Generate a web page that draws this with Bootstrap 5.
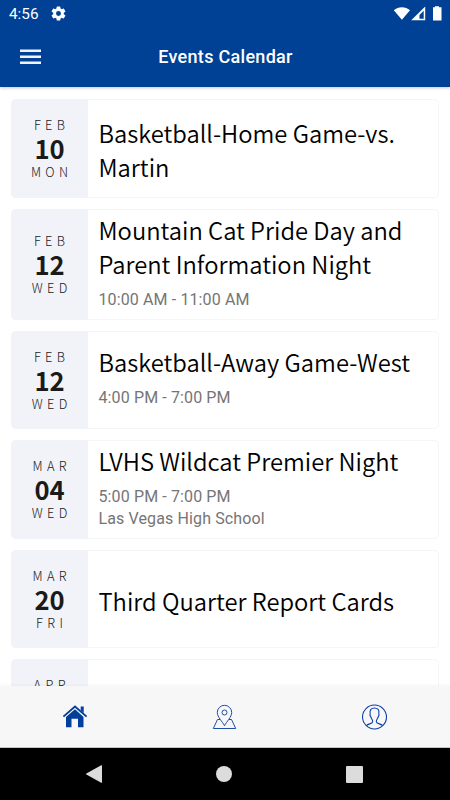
<!DOCTYPE html>
<html lang="en">
<head>
<meta charset="utf-8">
<meta name="viewport" content="width=device-width, initial-scale=1">
<title>Events Calendar</title>
<link href="https://cdn.jsdelivr.net/npm/bootstrap@5.3.0/dist/css/bootstrap.min.css" rel="stylesheet">
<style>
  body { font-family: Roboto, "Liberation Sans", sans-serif; height: 800px; }
  svg { display: block; }
  .app-head { background: #004195; height: 87px; box-shadow: 0 1px 3px rgba(0,0,0,.22); z-index: 2; }
  .status { height: 27px; padding: 0 8px 0 9px; font-size: 15.3px; line-height: 27px; }
  .status span { padding-top: 1px; }
  .gear { margin-left: 11px; }
  .title-row { height: 60px; display: grid; grid-template-columns: 78px 1fr 78px; }
  .title-row h1 { font-size: 18px; font-weight: 500; letter-spacing: .3px; line-height: 22px; padding-left: 1px; }
  .burger { margin-left: 20px; }
  .events { padding: 12px 11px 0; gap: 11px; }
  .event { border: 1px solid #f5f5f6; border-radius: 5px; min-height: 98.6px; }
  .event.tall { min-height: 111px; }
  .date { width: 77px; margin: -1px 0 -1px -1px; background: #f2f3f8; border-radius: 5px 0 0 5px; font-family: "Noto Sans CJK SC", sans-serif; color: #1a1a1a; }
  .date span { font-size: 12.8px; font-weight: 300; letter-spacing: 4.4px; line-height: 23px; margin-right: -4.4px; }
  .date strong { font-size: 25.6px; font-weight: 700; line-height: 23px; padding-bottom: 1px; }
  .date.partial { padding-top: 14px; }
  .info { padding: 3px 0 0 10.5px; color: #757575; font-size: 16px; letter-spacing: .12px; line-height: 22px; }
  .info.timed { padding: 0 0 3px 10.5px; }
  .info h2 { font-family: "Noto Sans CJK SC", sans-serif; font-size: 23.75px; font-weight: 350; letter-spacing: 0; line-height: 34px; color: #000; margin: 0; }
  .info.timed h2 { margin-top: -2px; margin-bottom: 8px; }
  .tabs { height: 62px; background: #f7f7f7; box-shadow: 0 -1px 3px rgba(0,0,0,.04); border-bottom: 1px solid #c4c4c4; z-index: 2; }
  .softkeys { height: 52px; background: #000; }
  .softkeys .keys { width: 391px; margin-right: 1px; }
  .back { margin-right: 1px; }
</style>
<script src="https://cdn.jsdelivr.net/npm/bootstrap@5.3.0/dist/js/bootstrap.bundle.min.js"></script>
</head>
<body class="d-flex flex-column overflow-hidden bg-white">
<header class="app-head flex-shrink-0 position-relative text-white">
  <div class="status d-flex align-items-center">
    <span>4:56</span>
    <svg class="gear" width="17" height="17" viewBox="0 0 24 24" fill="#fff"><path fill-rule="evenodd" d="M19.43 12.98c.04-.32.07-.64.07-.98s-.03-.66-.07-.98l2.11-1.65a.5.5 0 0 0 .12-.64l-2-3.46a.5.5 0 0 0-.61-.22l-2.49 1a7.3 7.3 0 0 0-1.69-.98l-.38-2.65A.49.49 0 0 0 14 2h-4a.49.49 0 0 0-.49.42l-.38 2.65c-.61.25-1.17.59-1.69.98l-2.49-1a.5.5 0 0 0-.61.22l-2 3.46a.5.5 0 0 0 .12.64l2.11 1.65c-.04.32-.07.65-.07.98s.03.66.07.98l-2.11 1.65a.5.5 0 0 0-.12.64l2 3.46c.12.22.39.3.61.22l2.49-1c.52.4 1.08.73 1.69.98l.38 2.65c.03.24.24.42.49.42h4c.25 0 .46-.18.49-.42l.38-2.65c.61-.25 1.17-.59 1.69-.98l2.49 1c.23.09.49 0 .61-.22l2-3.46a.5.5 0 0 0-.12-.64zM12 15.5a3.5 3.5 0 1 1 0-7 3.5 3.5 0 0 1 0 7z"/></svg>
    <svg class="ms-auto" width="49" height="16" viewBox="0 0 49 16" fill="#fff"><path d="M.8 4.300C5.300.200 12.500.200 17 4.300L8.900 13.800z"/><path fill-rule="evenodd" d="M32.200.5V14.300H18.200zM30.700 4.800 26.500 9V12.700H30.700z"/><path d="M42 1.200V.300h4v.9h2.500V14.500H40V1.200z" /></svg>
  </div>
  <div class="title-row align-items-center">
    <svg class="burger" width="21" height="16" viewBox="0 0 21 16" fill="#f1f3fb"><path d="M0 .5h21v2.500H0zM0 6.500h21v2.500H0zM0 12.500h21v2.500H0z"/></svg>
    <h1 class="m-0 text-center">Events Calendar</h1>
  </div>
</header>

<main class="events flex-grow-1 d-flex flex-column overflow-hidden">
  <article class="event d-flex flex-shrink-0">
    <div class="date d-flex flex-column align-items-center justify-content-center flex-shrink-0"><span>FEB</span><strong>10</strong><span>MON</span></div>
    <div class="info align-self-center"><h2>Basketball-Home Game-vs.<br>Martin</h2></div>
  </article>
  <article class="event tall d-flex flex-shrink-0">
    <div class="date d-flex flex-column align-items-center justify-content-center flex-shrink-0"><span>FEB</span><strong>12</strong><span>WED</span></div>
    <div class="info timed align-self-center"><h2>Mountain Cat Pride Day and<br>Parent Information Night</h2><div>10:00 AM - 11:00 AM</div></div>
  </article>
  <article class="event d-flex flex-shrink-0">
    <div class="date d-flex flex-column align-items-center justify-content-center flex-shrink-0"><span>FEB</span><strong>12</strong><span>WED</span></div>
    <div class="info timed align-self-center"><h2>Basketball-Away Game-West</h2><div>4:00 PM - 7:00 PM</div></div>
  </article>
  <article class="event d-flex flex-shrink-0">
    <div class="date d-flex flex-column align-items-center justify-content-center flex-shrink-0"><span>MAR</span><strong>04</strong><span>WED</span></div>
    <div class="info timed align-self-center"><h2>LVHS Wildcat Premier Night</h2><div>5:00 PM - 7:00 PM</div><div>Las Vegas High School</div></div>
  </article>
  <article class="event d-flex flex-shrink-0">
    <div class="date d-flex flex-column align-items-center justify-content-center flex-shrink-0"><span>MAR</span><strong>20</strong><span>FRI</span></div>
    <div class="info align-self-center"><h2>Third Quarter Report Cards</h2></div>
  </article>
  <article class="event d-flex flex-shrink-0">
    <div class="date partial d-flex flex-column align-items-center flex-shrink-0"><span>APR</span></div>
  </article>
</main>

<nav class="tabs row g-0 flex-shrink-0 position-relative align-items-center">
  <div class="col d-flex justify-content-center">
    <svg width="26" height="26" viewBox="0 0 26 26" fill="#003f9b"><path d="M18.700 2.500h3v6.500l-3-2.700z"/><path d="M13 1.300.8 12l1.200 1.300L13 3.800l11 9.500 1.200-1.300z"/><path d="M13 5.300 4 13V23.300h5.500V14.800h6.500v8.500h5.500V13z"/></svg>
  </div>
  <div class="col d-flex justify-content-center">
    <svg width="26" height="26" viewBox="0 0 26 26" fill="none" stroke="#1c4fa8" stroke-width="1"><path d="M12.500 21.800C10.500 17.500 5.300 13.200 5.300 8.500a7.200 7.200 0 0 1 14.400 0C19.700 13.200 14.500 17.500 12.500 21.800z"/><circle cx="12.500" cy="8.500" r="2.500"/><path d="M8 15.500H5.500L1.300 24.500H23.700L19.500 15.500H17"/></svg>
  </div>
  <div class="col d-flex justify-content-center">
    <svg width="26" height="26" viewBox="0 0 26 26" fill="none" stroke="#0d3fa8" stroke-width="1.100"><circle cx="12.500" cy="13" r="12"/><path d="M4.500 21.500C6.500 19.500 10.700 20 10.700 17.500 10.700 15.500 9.300 15 8.700 12.500 7.600 11.500 7.800 10.500 8.200 9.800 7.300 6 9.500 4 12.500 4s5.200 2 4.300 5.800c.4.700.6 1.700-.5 2.700-.6 2.500-2 3-2 5 0 2.500 4.200 2 6.200 4"/></svg>
  </div>
</nav>
<footer class="softkeys flex-shrink-0 d-flex justify-content-center">
  <div class="keys row g-0 align-items-center flex-shrink-0">
    <div class="col d-flex justify-content-center"><svg class="back" width="16" height="18" viewBox="0 0 16 18" fill="#dcdcdc"><path d="M15.200.3q.8-.4.800.5v16.400q0 .9-.8.500L.400 9.400q-.6-.4 0-.8z"/></svg></div>
    <div class="col d-flex justify-content-center"><svg width="16" height="16" viewBox="0 0 16 16" fill="#dcdcdc"><circle cx="8" cy="8" r="8"/></svg></div>
    <div class="col d-flex justify-content-center"><svg width="17" height="17" viewBox="0 0 17 17" fill="#dcdcdc"><rect width="17" height="17" rx="1"/></svg></div>
  </div>
</footer>
</body>
</html>
